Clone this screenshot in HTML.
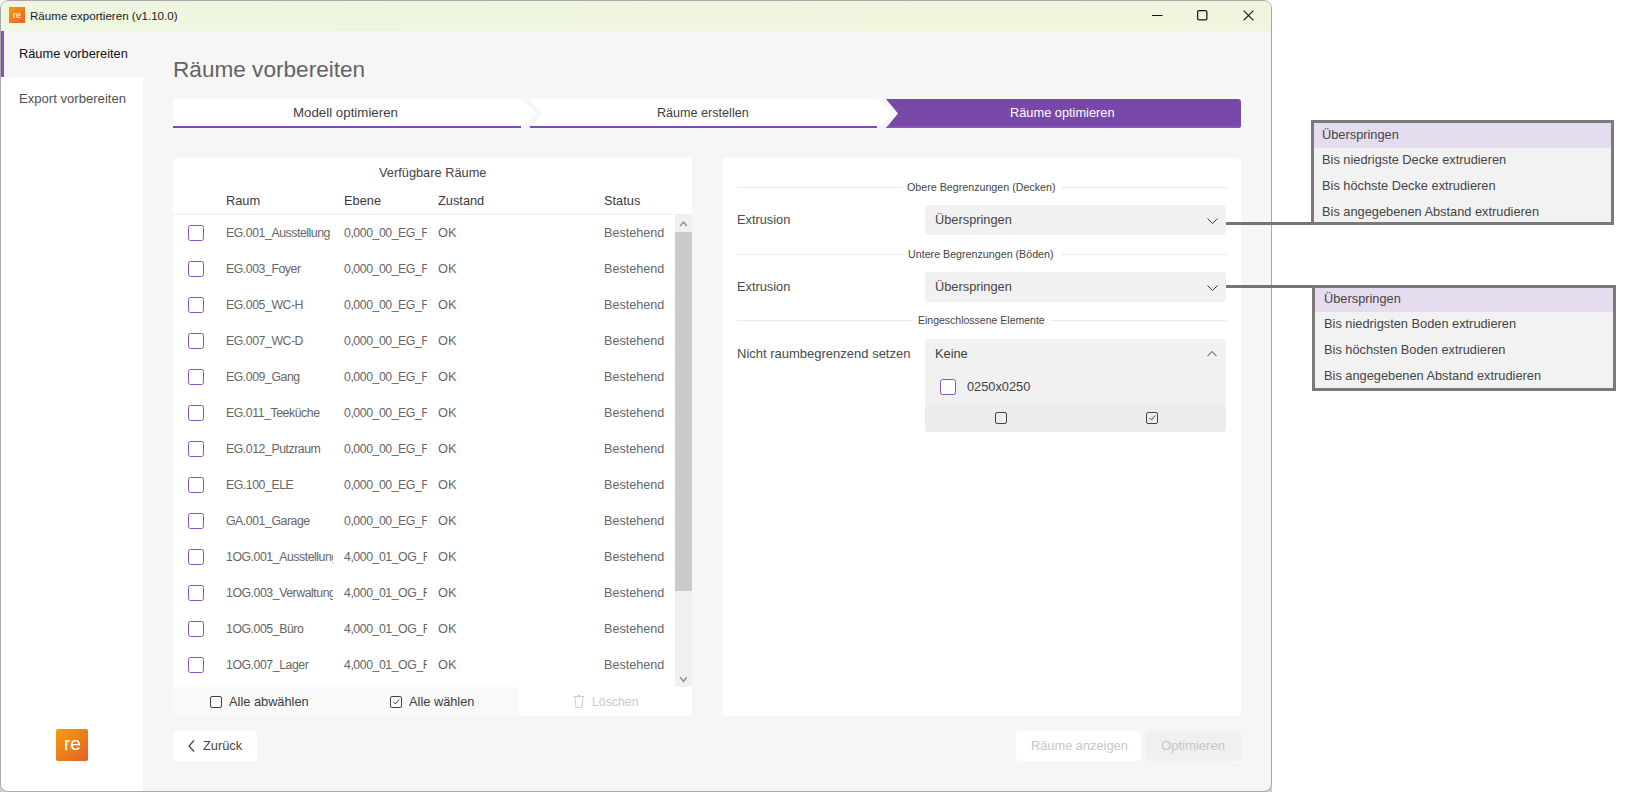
<!DOCTYPE html>
<html><head><meta charset="utf-8">
<style>
*{box-sizing:border-box;margin:0;padding:0}
html,body{width:1630px;height:792px;overflow:hidden;background:#fff;font-family:"Liberation Sans",sans-serif;}
.a{position:absolute}
.t{position:absolute;white-space:nowrap;height:20px;line-height:20px;font-size:12.8px;color:#666}
#win{position:absolute;left:0;top:0;width:1272px;height:792px;border:1px solid #a8a8a8;border-radius:8px;background:#f6f6f6;overflow:hidden}
#title{position:absolute;left:0;top:0;width:1270px;height:30px;background:linear-gradient(90deg,#eef6e1,#f1f5dd)}
.cb{position:absolute;width:16px;height:16px;border:1.3px solid #8655b8;border-radius:2.5px;background:#fff}
.rt{font-size:12.3px;letter-spacing:-0.45px}
.clip{overflow:hidden}
</style></head><body>
<div class="a" style="left:0;top:783px;width:9px;height:9px;background:#cdcdcd"></div>
<div class="a" style="left:1263px;top:783px;width:9px;height:9px;background:#cdcdcd"></div>
<div id="win">
  <div id="title">
    <div class="a" style="left:8px;top:6px;width:16px;height:16px;background:linear-gradient(135deg,#f29d0d,#e8612a)"></div>
    <div class="t" style="left:12px;top:4px;font-size:9px;color:#fff">re</div>
    <div class="t" style="left:29px;top:5px;font-size:11.6px;color:#1a1a1a">Räume exportieren (v1.10.0)</div>
    <svg class="a" style="left:1140px;top:0" width="130" height="30">
      <line x1="11" y1="14.5" x2="21.5" y2="14.5" stroke="#111" stroke-width="1.1"/>
      <rect x="56.6" y="9.6" width="9.3" height="9.3" rx="1.5" fill="none" stroke="#111" stroke-width="1.2"/>
      <path d="M102.6 9.6 L112.4 19.4 M112.4 9.6 L102.6 19.4" stroke="#111" stroke-width="1.1"/>
    </svg>
  </div>
  <!-- sidebar -->
  <div class="a" style="left:0;top:76px;width:142px;height:720px;background:#fff"></div>
  <div class="a" style="left:0;top:30px;width:3px;height:46px;background:#8653bd"></div>
  <div class="t" style="left:18px;top:43px;color:#111">Räume vorbereiten</div>
  <div class="t" style="left:18px;top:88px;font-size:13.1px;color:#505050">Export vorbereiten</div>
  <div class="a" style="left:55px;top:728px;width:32px;height:32px;border-radius:2px;background:linear-gradient(135deg,#f0a00c,#e85f2b)"></div>
  <div class="t" style="left:63px;top:733px;font-size:19px;color:#fff">re</div>

  <!-- heading -->
  <div class="t" style="left:172px;top:53.5px;height:30px;line-height:30px;font-size:22.6px;color:#636363">Räume vorbereiten</div>

  <!-- stepper -->
  <svg class="a" style="left:0;top:0" width="1272" height="140">
    <path d="M172 98 L520 98 L536 112.5 L520 127 L172 127 Z" fill="#fff"/>
    <rect x="172" y="125" width="348" height="2" fill="#7f4cb1"/>
    <path d="M529 98 L876 98 L892 112.5 L876 127 L529 127 L541 112.5 Z" fill="#fff"/>
    <rect x="529" y="125" width="347" height="2" fill="#7f4cb1"/>
    <path d="M885 98 L1237 98 Q1240 98 1240 101 L1240 124 Q1240 127 1237 127 L885 127 L897 112.5 Z" fill="#7848a9"/>
    <path d="M885 127 L1237 127 Q1240 127 1240 124 L1240 125 L886.7 125 Z" fill="#8753b8"/>
  </svg>
  <div class="t" style="left:292px;top:102px;font-size:13.3px;color:#404040">Modell optimieren</div>
  <div class="t" style="left:656px;top:102px;font-size:12.6px;color:#404040">Räume erstellen</div>
  <div class="t" style="left:1009px;top:102px;color:#fff">Räume optimieren</div>

  <!-- left panel -->
  <div class="a" style="left:172px;top:157px;width:519px;height:558px;background:#fff;border-radius:4px"></div>
  <div class="t" style="left:378px;top:162px;color:#444">Verfügbare Räume</div>
  <div class="t" style="left:225px;top:190px;color:#3a3a3a">Raum</div>
  <div class="t" style="left:343px;top:190px;color:#3a3a3a">Ebene</div>
  <div class="t" style="left:437px;top:190px;color:#3a3a3a">Zustand</div>
  <div class="t" style="left:603px;top:190px;color:#3a3a3a">Status</div>
  <div class="a" style="left:172px;top:213px;width:519px;height:1px;background:#ededed"></div>
    <div class="cb" style="left:187px;top:224px"></div>
  <div class="t clip rt" style="left:225px;top:222px;width:107px">EG.001_Ausstellung</div>
  <div class="t clip rt" style="left:343px;top:222px;width:83px">0,000_00_EG_F</div>
  <div class="t" style="left:437px;top:222px">OK</div>
  <div class="t" style="left:603px;top:222px;font-size:12.6px">Bestehend</div>
  <div class="cb" style="left:187px;top:260px"></div>
  <div class="t clip rt" style="left:225px;top:258px;width:107px">EG.003_Foyer</div>
  <div class="t clip rt" style="left:343px;top:258px;width:83px">0,000_00_EG_F</div>
  <div class="t" style="left:437px;top:258px">OK</div>
  <div class="t" style="left:603px;top:258px;font-size:12.6px">Bestehend</div>
  <div class="cb" style="left:187px;top:296px"></div>
  <div class="t clip rt" style="left:225px;top:294px;width:107px">EG.005_WC-H</div>
  <div class="t clip rt" style="left:343px;top:294px;width:83px">0,000_00_EG_F</div>
  <div class="t" style="left:437px;top:294px">OK</div>
  <div class="t" style="left:603px;top:294px;font-size:12.6px">Bestehend</div>
  <div class="cb" style="left:187px;top:332px"></div>
  <div class="t clip rt" style="left:225px;top:330px;width:107px">EG.007_WC-D</div>
  <div class="t clip rt" style="left:343px;top:330px;width:83px">0,000_00_EG_F</div>
  <div class="t" style="left:437px;top:330px">OK</div>
  <div class="t" style="left:603px;top:330px;font-size:12.6px">Bestehend</div>
  <div class="cb" style="left:187px;top:368px"></div>
  <div class="t clip rt" style="left:225px;top:366px;width:107px">EG.009_Gang</div>
  <div class="t clip rt" style="left:343px;top:366px;width:83px">0,000_00_EG_F</div>
  <div class="t" style="left:437px;top:366px">OK</div>
  <div class="t" style="left:603px;top:366px;font-size:12.6px">Bestehend</div>
  <div class="cb" style="left:187px;top:404px"></div>
  <div class="t clip rt" style="left:225px;top:402px;width:107px">EG.011_Teeküche</div>
  <div class="t clip rt" style="left:343px;top:402px;width:83px">0,000_00_EG_F</div>
  <div class="t" style="left:437px;top:402px">OK</div>
  <div class="t" style="left:603px;top:402px;font-size:12.6px">Bestehend</div>
  <div class="cb" style="left:187px;top:440px"></div>
  <div class="t clip rt" style="left:225px;top:438px;width:107px">EG.012_Putzraum</div>
  <div class="t clip rt" style="left:343px;top:438px;width:83px">0,000_00_EG_F</div>
  <div class="t" style="left:437px;top:438px">OK</div>
  <div class="t" style="left:603px;top:438px;font-size:12.6px">Bestehend</div>
  <div class="cb" style="left:187px;top:476px"></div>
  <div class="t clip rt" style="left:225px;top:474px;width:107px">EG.100_ELE</div>
  <div class="t clip rt" style="left:343px;top:474px;width:83px">0,000_00_EG_F</div>
  <div class="t" style="left:437px;top:474px">OK</div>
  <div class="t" style="left:603px;top:474px;font-size:12.6px">Bestehend</div>
  <div class="cb" style="left:187px;top:512px"></div>
  <div class="t clip rt" style="left:225px;top:510px;width:107px">GA.001_Garage</div>
  <div class="t clip rt" style="left:343px;top:510px;width:83px">0,000_00_EG_F</div>
  <div class="t" style="left:437px;top:510px">OK</div>
  <div class="t" style="left:603px;top:510px;font-size:12.6px">Bestehend</div>
  <div class="cb" style="left:187px;top:548px"></div>
  <div class="t clip rt" style="left:225px;top:546px;width:107px">1OG.001_Ausstellung</div>
  <div class="t clip rt" style="left:343px;top:546px;width:83px">4,000_01_OG_F</div>
  <div class="t" style="left:437px;top:546px">OK</div>
  <div class="t" style="left:603px;top:546px;font-size:12.6px">Bestehend</div>
  <div class="cb" style="left:187px;top:584px"></div>
  <div class="t clip rt" style="left:225px;top:582px;width:107px">1OG.003_Verwaltung</div>
  <div class="t clip rt" style="left:343px;top:582px;width:83px">4,000_01_OG_F</div>
  <div class="t" style="left:437px;top:582px">OK</div>
  <div class="t" style="left:603px;top:582px;font-size:12.6px">Bestehend</div>
  <div class="cb" style="left:187px;top:620px"></div>
  <div class="t clip rt" style="left:225px;top:618px;width:107px">1OG.005_Büro</div>
  <div class="t clip rt" style="left:343px;top:618px;width:83px">4,000_01_OG_F</div>
  <div class="t" style="left:437px;top:618px">OK</div>
  <div class="t" style="left:603px;top:618px;font-size:12.6px">Bestehend</div>
  <div class="cb" style="left:187px;top:656px"></div>
  <div class="t clip rt" style="left:225px;top:654px;width:107px">1OG.007_Lager</div>
  <div class="t clip rt" style="left:343px;top:654px;width:83px">4,000_01_OG_F</div>
  <div class="t" style="left:437px;top:654px">OK</div>
  <div class="t" style="left:603px;top:654px;font-size:12.6px">Bestehend</div>
  <!-- scrollbar -->
  <div class="a" style="left:674px;top:214px;width:17px;height:472px;background:#f0f0f0"></div>
  <div class="a" style="left:674px;top:231px;width:17px;height:359px;background:#cbcbcb"></div>
  <svg class="a" style="left:674px;top:214px" width="17" height="472">
    <path d="M5.2 11 L8.5 7 L11.8 11" fill="none" stroke="#8e8e8e" stroke-width="1.4"/>
    <path d="M5.2 462.3 L8.5 466.3 L11.8 462.3" fill="none" stroke="#8e8e8e" stroke-width="1.4"/>
  </svg>
  <!-- footer -->
  <div class="a" style="left:172px;top:686px;width:346px;height:29px;background:#f9f9f9;border-radius:0 0 0 4px"></div>
  <svg class="a" style="left:200px;top:690px" width="300" height="22">
    <rect x="9.5" y="5.5" width="11" height="11" rx="1.5" fill="none" stroke="#444" stroke-width="1"/>
    <rect x="189.5" y="5.5" width="11" height="11" rx="1.5" fill="none" stroke="#444" stroke-width="1"/>
    <path d="M192.5 11 L194.5 13 L198 8.5" fill="none" stroke="#444" stroke-width="1"/>
  </svg>
  <div class="t" style="left:228px;top:691px;color:#3c3c3c">Alle abwählen</div>
  <div class="t" style="left:408px;top:691px;color:#3c3c3c">Alle wählen</div>
  <svg class="a" style="left:570px;top:692px" width="16" height="18">
    <path d="M2.5 3.5 H13.5 M6.2 3.5 Q8 0.6 9.8 3.5 M3.8 3.5 L5 14.5 H11 L12.2 3.5" fill="none" stroke="#cdcdcd" stroke-width="1"/>
  </svg>
  <div class="t" style="left:591px;top:691px;font-size:12.3px;color:#c8c8c8">Löschen</div>

  <!-- right panel -->
  <div class="a" style="left:721px;top:157px;width:519px;height:558px;background:#fff;border-radius:4px"></div>
  <div class="a" style="left:736px;top:186px;width:166px;height:1px;background:#ececec"></div>
  <div class="a" style="left:1060px;top:186px;width:166px;height:1px;background:#ececec"></div>
  <div class="t" style="left:906px;top:175.5px;font-size:10.7px;color:#444">Obere Begrenzungen (Decken)</div>
  <div class="t" style="left:736px;top:209px;color:#4a4a4a">Extrusion</div>
  <div class="a" style="left:924px;top:204px;width:301px;height:30px;background:#f1f1f1;border-radius:4px"></div>
  <div class="t" style="left:934px;top:209px;color:#464646">Überspringen</div>
  <svg class="a" style="left:1200px;top:210px" width="20" height="20"><path d="M6.5 7.5 L11.5 12.5 L16.5 7.5" fill="none" stroke="#3a3a3a" stroke-width="1"/></svg>

  <div class="a" style="left:736px;top:253px;width:166px;height:1px;background:#ececec"></div>
  <div class="a" style="left:1060px;top:253px;width:166px;height:1px;background:#ececec"></div>
  <div class="t" style="left:907px;top:242.5px;font-size:10.7px;color:#444">Untere Begrenzungen (Böden)</div>
  <div class="t" style="left:736px;top:276px;color:#4a4a4a">Extrusion</div>
  <div class="a" style="left:924px;top:271px;width:301px;height:30px;background:#f1f1f1;border-radius:4px"></div>
  <div class="t" style="left:934px;top:276px;color:#464646">Überspringen</div>
  <svg class="a" style="left:1200px;top:277px" width="20" height="20"><path d="M6.5 7.5 L11.5 12.5 L16.5 7.5" fill="none" stroke="#3a3a3a" stroke-width="1"/></svg>

  <div class="a" style="left:736px;top:319px;width:176px;height:1px;background:#ececec"></div>
  <div class="a" style="left:1050px;top:319px;width:176px;height:1px;background:#ececec"></div>
  <div class="t" style="left:917px;top:309px;font-size:10.5px;color:#444">Eingeschlossene Elemente</div>
  <div class="t" style="left:736px;top:343px;font-size:13px;color:#4a4a4a">Nicht raumbegrenzend setzen</div>
  <div class="a" style="left:924px;top:338px;width:301px;height:93px;background:#f1f1f1;border-radius:4px;overflow:hidden">
    <div class="a" style="left:0;top:66px;width:302px;height:27px;background:#ececec"></div>
  </div>
  <div class="t" style="left:934px;top:343px;color:#404040">Keine</div>
  <svg class="a" style="left:1200px;top:343px" width="20" height="20"><path d="M6.5 12 L11 7.5 L15.5 12" fill="none" stroke="#3a3a3a" stroke-width="1"/></svg>
  <div class="cb" style="left:939px;top:378px"></div>
  <div class="t" style="left:966px;top:376px;color:#404040">0250x0250</div>
  <svg class="a" style="left:990px;top:408px" width="170" height="18">
    <rect x="4.5" y="3.5" width="11" height="11" rx="1.5" fill="none" stroke="#444" stroke-width="1"/>
    <rect x="155.5" y="3.5" width="11" height="11" rx="1.5" fill="none" stroke="#444" stroke-width="1"/>
    <path d="M158.5 9 L160.5 11 L164 6.5" fill="none" stroke="#444" stroke-width="1"/>
  </svg>

  <!-- bottom buttons -->
  <div class="a" style="left:172px;top:730px;width:84px;height:30px;background:#fff;border-radius:4px"></div>
  <svg class="a" style="left:184px;top:737px" width="14" height="16"><path d="M9 2.5 L4 8 L9 13.5" fill="none" stroke="#444" stroke-width="1.2"/></svg>
  <div class="t" style="left:202px;top:735px;color:#444">Zurück</div>
  <div class="a" style="left:1015px;top:730px;width:125px;height:30px;background:#fff;border-radius:4px"></div>
  <div class="t" style="left:1030px;top:735px;color:#c6c6c6">Räume anzeigen</div>
  <div class="a" style="left:1145px;top:730px;width:95px;height:30px;background:#f0f0f0;border-radius:4px"></div>
  <div class="t" style="left:1160px;top:735px;font-size:13.1px;color:#c6c6c6">Optimieren</div>
</div>

<!-- popups -->
<div class="a" style="left:1226px;top:222px;width:90px;height:3px;background:#757575"></div>
<div class="a" style="left:1311px;top:120px;width:303px;height:105px;border:3px solid #7a7a7a;background:#f2f2f2">
  <div class="a" style="left:0;top:0;width:297px;height:25px;background:#e5dcef"></div>
</div>
<div class="t" style="left:1322px;top:125px;color:#444">Überspringen</div>
<div class="t" style="left:1322px;top:150px;color:#444">Bis niedrigste Decke extrudieren</div>
<div class="t" style="left:1322px;top:176px;color:#444">Bis höchste Decke extrudieren</div>
<div class="t" style="left:1322px;top:202px;color:#444">Bis angegebenen Abstand extrudieren</div>

<div class="a" style="left:1226px;top:285px;width:90px;height:3px;background:#757575"></div>
<div class="a" style="left:1312px;top:285px;width:304px;height:106px;border:3px solid #7a7a7a;background:#f2f2f2">
  <div class="a" style="left:0;top:0;width:298px;height:24px;background:#e5dcef"></div>
</div>
<div class="t" style="left:1324px;top:289px;color:#444">Überspringen</div>
<div class="t" style="left:1324px;top:314px;color:#444">Bis niedrigsten Boden extrudieren</div>
<div class="t" style="left:1324px;top:340px;color:#444">Bis höchsten Boden extrudieren</div>
<div class="t" style="left:1324px;top:366px;color:#444">Bis angegebenen Abstand extrudieren</div>
</body></html>
